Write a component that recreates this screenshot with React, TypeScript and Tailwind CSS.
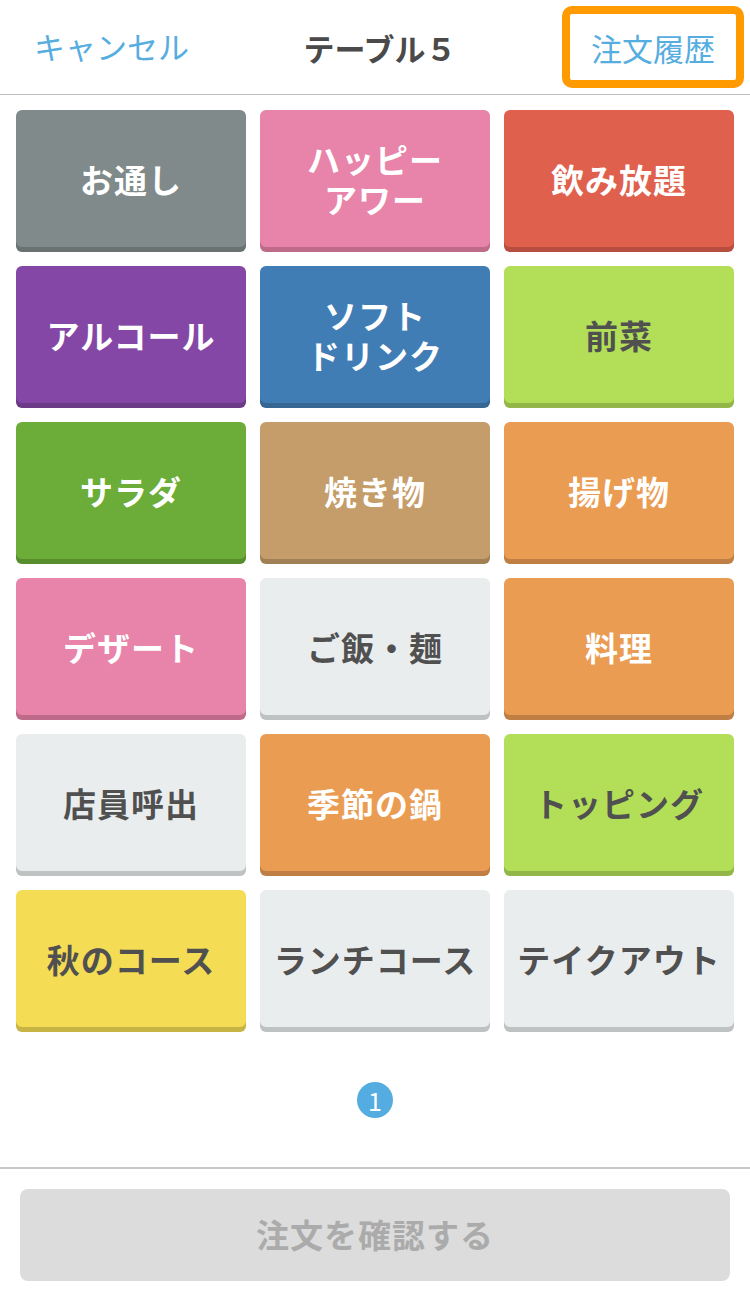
import React from "react";

type Tile = { label: string[]; bg: string; dark?: boolean };

const tiles: Tile[] = [
  { label: ["お通し"], bg: "bg-[#808a8a]" },
  { label: ["ハッピー", "アワー"], bg: "bg-[#e883a9]" },
  { label: ["飲み放題"], bg: "bg-[#e0604e]" },
  { label: ["アルコール"], bg: "bg-[#8547a5]" },
  { label: ["ソフト", "ドリンク"], bg: "bg-[#417db5]" },
  { label: ["前菜"], bg: "bg-[#b3df58]", dark: true },
  { label: ["サラダ"], bg: "bg-[#6bad38]" },
  { label: ["焼き物"], bg: "bg-[#c59d6a]" },
  { label: ["揚げ物"], bg: "bg-[#ea9c53]" },
  { label: ["デザート"], bg: "bg-[#e883a9]" },
  { label: ["ご飯・麺"], bg: "bg-[#eaedee]", dark: true },
  { label: ["料理"], bg: "bg-[#ea9c53]" },
  { label: ["店員呼出"], bg: "bg-[#eaedee]", dark: true },
  { label: ["季節の鍋"], bg: "bg-[#ea9c53]" },
  { label: ["トッピング"], bg: "bg-[#b3df58]", dark: true },
  { label: ["秋のコース"], bg: "bg-[#f4dc55]", dark: true },
  { label: ["ランチコース"], bg: "bg-[#eaedee]", dark: true },
  { label: ["テイクアウト"], bg: "bg-[#eaedee]", dark: true },
];

export default function App() {
  return (
    <div
      className="w-[750px] h-[1300px] bg-white flex flex-col"
      style={{ fontFamily: '"Noto Sans CJK JP", "Noto Sans", sans-serif' }}
    >
      <header className="h-[95px] border-b border-[#bdbdbd] flex items-center pl-[34px] pr-[6px]">
        <div className="flex-1">
          <span className="text-[31px] text-[#56ade0] leading-none">キャンセル</span>
        </div>
        <span className="text-[31px] font-bold text-[#4a4a4a] leading-none pr-[18px]">テーブル５</span>
        <div className="flex-1 flex justify-end">
          <div className="w-[182px] h-[82px] rounded-[10px] border-[8px] border-[#ff9a00] flex items-center justify-center">
            <span className="text-[31px] text-[#56ade0] leading-none">注文履歴</span>
          </div>
        </div>
      </header>
      <div className="grid grid-cols-3 gap-[14px] px-[16px] pt-[15px]">
        {tiles.map((t, i) => (
          <div
            key={i}
            className={`${t.bg} h-[142px] rounded-[6px] shadow-[inset_0_-5px_0_rgba(0,0,0,0.18)] flex items-center justify-center pb-[5px] ${
              t.dark ? "text-[#505050]" : "text-white"
            }`}
          >
            <p className="text-center text-[33px] font-bold leading-[40px] tracking-[1px]">
              {t.label.map((l, j) => (
                <React.Fragment key={j}>
                  {j > 0 && <br />}
                  {l}
                </React.Fragment>
              ))}
            </p>
          </div>
        ))}
      </div>
      <div className="flex justify-center mt-[50px]">
        <div className="w-[36px] h-[36px] rounded-full bg-[#55ace0] text-white text-[25px] leading-none flex items-center justify-center">
          1
        </div>
      </div>
      <div className="mt-[49px] border-t-2 border-[#c8c8c8] px-[20px] pt-[20px]">
        <div className="h-[92px] rounded-[8px] bg-[#dcdcdc] flex items-center justify-center">
          <span className="text-[33px] font-bold text-[#ababab] tracking-[1px]">注文を確認する</span>
        </div>
      </div>
    </div>
  );
}
